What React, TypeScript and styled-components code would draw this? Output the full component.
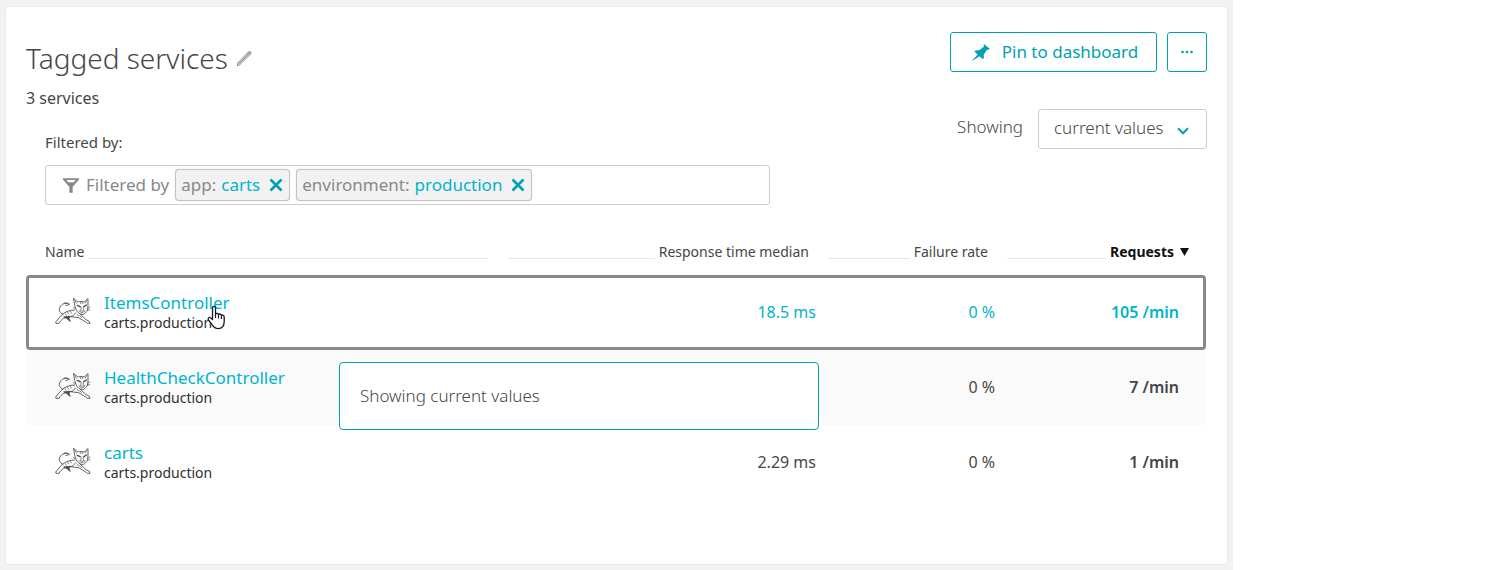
import React from 'react';
import styled, { createGlobalStyle, css } from 'styled-components';

const teal = '#00a1b2';
const linkBlue = '#00b4cc';
const ink = '#454646';
const muted = '#898989';
const line = '#cccccc';

const GlobalStyle = createGlobalStyle`
  *, *::before, *::after { box-sizing: border-box; }
  body {
    margin: 0;
    background: #fff;
    color: ${ink};
    font-family: 'Noto Sans', 'Open Sans', sans-serif;
    font-size: 17px;
    line-height: 20px;
  }
  button, input, select { font: inherit; color: inherit; margin: 0; }
`;

const Shell = styled.main`
  display: flex;
  width: 100%;
  max-width: 1233px;
  min-height: 100vh;
  padding: 6px 5px 5px;
  background: #f2f2f2;
`;

const Card = styled.section`
  flex: 1;
  min-width: 0;
  padding: 25px 20px;
  background: #fff;
  border: 1px solid #e6ecec;
  border-radius: 4px;
`;

const Header = styled.header`
  display: flex;
  justify-content: space-between;
  gap: 24px;
`;

const Heading = styled.div`
  flex: 1;
  max-width: 744px;
  padding-top: 3px;
`;

const TitleRow = styled.div`
  display: flex;
  align-items: center;
  gap: 8px;
`;

const Title = styled.h1`
  margin: 0;
  font-size: 28px;
  line-height: 46px;
  font-weight: 300;
`;

const IconButton = styled.button`
  display: inline-flex;
  padding: 0;
  border: 0;
  background: none;
  color: ${teal};
  cursor: pointer;
`;

const Count = styled.p`
  margin: 7px 0 0;
  font-size: 16px;
  line-height: 20px;
`;

const Filter = styled.div`
  margin: 24px 0 0 19px;
`;

const FilterLabel = styled.label`
  display: block;
  font-size: 15px;
  line-height: 20px;
`;

const FilterBox = styled.div`
  display: flex;
  align-items: center;
  height: 40px;
  margin-top: 13px;
  padding: 0 3px 0 17px;
  border: 1px solid ${line};
  border-radius: 3px;
  color: ${muted};
`;

const FilterHint = styled.span`
  margin: 0 6px 0 7px;
  white-space: nowrap;
`;

const Chip = styled.span`
  display: inline-flex;
  align-items: center;
  height: 32px;
  margin-right: 6px;
  padding: 0 6px 0 5px;
  border: 1px solid #c4c4c4;
  border-radius: 4px;
  box-shadow: 0 0 1px #bbb;
  background: #f2f2f2;
  white-space: nowrap;
`;

const ChipValue = styled.span`
  margin: 0 9px 0 5px;
  color: ${linkBlue};
`;

const FilterInput = styled.input`
  flex: 1;
  min-width: 0;
  border: 0;
  outline: 0;
  background: none;
`;

const Controls = styled.div`
  display: flex;
  flex-direction: column;
  align-items: flex-end;
  gap: 37px;
`;

const ButtonRow = styled.div`
  display: flex;
  gap: 10px;
`;

const OutlineButton = styled.button<{ $square?: boolean }>`
  display: flex;
  align-items: center;
  justify-content: center;
  gap: 12px;
  width: ${p => (p.$square ? '40px' : '207px')};
  height: 40px;
  padding: 0 ${p => (p.$square ? '0' : '0 0 3px')};
  border: 1px solid ${teal};
  border-radius: 3px;
  background: #fff;
  color: ${teal};
  cursor: pointer;
`;

const Showing = styled.div`
  display: flex;
  align-items: center;
  gap: 15px;
  font-weight: 300;
  > label { padding-bottom: 4px; }
`;

const SelectWrap = styled.div`
  display: grid;
  align-items: center;
  width: 169px;
  > * { grid-area: 1 / 1; }
  > svg { justify-self: end; margin: 4px 18px 0 0; pointer-events: none; }
`;

const Select = styled.select`
  width: 100%;
  height: 40px;
  padding: 0 36px 2px 15px;
  appearance: none;
  border: 1px solid ${line};
  border-radius: 3px;
  background: #fff;
`;

const TableArea = styled.div`
  position: relative;
  margin: 33px 1px 0 0;
`;

const Table = styled.table`
  width: 100%;
  table-layout: fixed;
  border-collapse: separate;
  border-spacing: 0;
`;

const Th = styled.th<{ $width?: number; $first?: boolean; $last?: boolean }>`
  width: ${p => (p.$width ? `${p.$width}px` : 'auto')};
  height: 37px;
  padding: 0 ${p => (p.$last ? 17 : p.$first ? 10 : 9)}px 9px ${p => (p.$first ? 19 : 10)}px;
  font-size: 14px;
  line-height: 20px;
  font-weight: ${p => (p.$last ? 700 : 400)};
  color: ${p => (p.$last ? '#111' : ink)};
`;

const ThInner = styled.div<{ $first?: boolean }>`
  display: flex;
  align-items: center;
  flex-direction: ${p => (p.$first ? 'row-reverse' : 'row')};
  gap: 4px;
  white-space: nowrap;
  &::before {
    content: '';
    flex: 1;
    height: 1px;
    margin-top: 13px;
    background: #e6e6e6;
  }
`;

const SortButton = styled.button`
  display: flex;
  align-items: center;
  gap: 6px;
  padding: 0;
  border: 0;
  background: none;
`;

const Td = styled.td`
  height: 75px;
  padding: 0 2px 2px 0;
  border: 3px solid transparent;
  border-width: 3px 0;
  font-size: 16px;
  text-align: right;
  &:first-child {
    padding: 0 0 0 26px;
    border-left-width: 3px;
    border-radius: 4px 0 0 4px;
    font-size: 17px;
    text-align: left;
  }
  &:last-child {
    padding-right: 24px;
    border-right-width: 3px;
    border-radius: 0 4px 4px 0;
    font-weight: 600;
  }
`;

const Row = styled.tr<{ $active?: boolean; $shaded?: boolean }>`
  background: ${p => (p.$shaded ? '#fafafa' : '#fff')};
  ${p => p.$active && css`
    color: ${linkBlue};
    ${Td} { border-color: ${muted}; }
  `}
`;

const NameCell = styled.div`
  display: flex;
  align-items: center;
  gap: 13px;
  > svg { margin-bottom: 4px; }
`;

const NameText = styled.div`
  position: relative;
`;

const ServiceLink = styled.a`
  display: block;
  color: ${linkBlue};
  text-decoration: none;
`;

const ServiceSource = styled.span`
  display: block;
  font-size: 14px;
  line-height: 20px;
  color: #2f3030;
`;

const Pointer = styled.svg`
  position: absolute;
  left: 103px;
  top: 12px;
`;

const Tooltip = styled.div`
  position: absolute;
  left: 313px;
  top: 124px;
  width: 480px;
  padding: 23px 20px;
  border: 1px solid ${teal};
  border-radius: 4px;
  background: #fff;
  line-height: 20px;
  font-weight: 300;
`;

const PencilIcon = () => (
  <svg width="16" height="17" viewBox="0 0 48 51" aria-hidden="true">
    <path d="M2 49 6 37 35 6c4-4 7-4 10-1 3 3 2 6-1 9L14 43Z" fill="#a6a6a6" />
    <path d="m2 49 4-12 8 7Z" fill="#777" />
    <path d="m10 38 27-28M13 41l28-28" stroke="#cfcfcf" strokeWidth="2" />
    <path d="m5 45 3-6 4 4Z" fill="#fff" />
  </svg>
);

const PinIcon = () => (
  <svg width="18" height="17" viewBox="0 0 53 50" fill="currentColor" aria-hidden="true">
    <path d="M0 49 17 31 7 22c3-3 8-4 13-3L35 8c-1-3-1-6 0-8l18 15c-3 2-6 3-9 2L34 32c2 5 1 10-2 13L22 36 1 50Z" />
  </svg>
);

const FunnelIcon = () => (
  <svg width="16" height="15" viewBox="0 0 48 45" fill="currentColor" aria-hidden="true">
    <path fillRule="evenodd" d="M0 1h48v4L29 26v18H19V26L0 5ZM10 6l6 7h16l6-7Z" />
  </svg>
);

const CloseIcon = () => (
  <svg width="14" height="14" viewBox="0 0 14 14" aria-hidden="true">
    <path d="m1.500 1.500 11 11M12.500 1.500l-11 11" stroke="currentColor" strokeWidth="2.600" />
  </svg>
);

const ChevronIcon = () => (
  <svg width="12" height="8" viewBox="0 0 12 8" fill="none" aria-hidden="true">
    <path d="m1 1.300 5 5 5-5" stroke={teal} strokeWidth="2" />
  </svg>
);

const DotsIcon = () => (
  <svg width="12" height="4" viewBox="0 0 12 4" fill="currentColor" aria-hidden="true">
    <circle cx="1.500" cy="2" r="1.300" />
    <circle cx="6" cy="2" r="1.300" />
    <circle cx="10.500" cy="2" r="1.300" />
  </svg>
);

const SortIcon = () => (
  <svg width="9" height="8" viewBox="0 0 9 8" fill="currentColor" aria-hidden="true">
    <path d="M0 0h9L4.500 8Z" />
  </svg>
);

const CatIcon = () => (
  <svg width="36" height="28" viewBox="0 0 108 84" fill="none" stroke="#4a4a4a" strokeWidth="2.600" strokeLinecap="round" strokeLinejoin="round" aria-hidden="true">
    <path d="M56 5c4 2 9 6 12 10 7-2 14-2 20 0 3-4 7-7 11-10v20l-1 14c-4 7-9 12-15 14-9-2-17-7-20-16-4-10-6-21-7-32Z" />
    <path d="m60 11 4 8M95 11l-4 7M77 16v4M83 16v4" strokeWidth="2" />
    <path d="m67 25 8 4M94 24l-7 5" strokeWidth="4" />
    <path d="M78 29v8l-3 3 6 3 7-3-3-3v-8M72 42l9 6 9-6" strokeWidth="2" />
    <path d="m55 32 6 2M99 33l6-3M98 38l7 1" strokeWidth="2" />
    <path d="M42 22c-10-6-22-2-27 8-5 9-1 18 9 22M42 22c-3-5-9-6-15-3M43 21c-3 4-7 5-11 4" />
    <path d="M59 39c-17 0-31 6-41 17L2 75l1 4h9c3-6 8-11 14-15l20-6" />
    <path d="M31 50l3 5M38 46l3 5M46 43l3 5" strokeWidth="2" />
    <path d="M61 48c-4 7-8 10-15 11l25 3 21 13 5 4h8l-2-6-10-5-17-16" />
    <path d="M27 60c6 2 9 5 13 9l6 4-4-8 2-6Z" fill="#4a4a4a" />
    <path d="M66 51l5 6M74 56l6 6" strokeWidth="2" />
  </svg>
);

const PointerIcon = () => (
  <Pointer width="20" height="26" viewBox="0 0 20 26" aria-hidden="true">
    <path
      d="M5.500 3c0-2.300 3-2.300 3 0v6c.8-1 2.600-.8 3 .5.900-.9 2.500-.5 2.900.8 1.200-.7 2.800.1 2.800 1.700v4.600c0 4.300-2.200 7-6 7-3.200 0-4.500-1.300-6-3.800l-3.700-5c-1-1.500.6-3 2-2l2 1.700Z"
      fill="#fff" stroke="#16182c" strokeWidth="1.300" strokeLinejoin="round"
    />
    <path d="M8.500 9v4M11.500 9.500v4M14.400 10.500v3.500" stroke="#16182c" strokeWidth="1.200" />
  </Pointer>
);

const filters = [
  { key: 'app:', value: 'carts' },
  { key: 'environment:', value: 'production' },
];

const services = [
  { name: 'ItemsController', source: 'carts.production', median: '18.5 ms', failures: '0 %', requests: '105 /min', hovered: true },
  { name: 'HealthCheckController', source: 'carts.production', median: '', failures: '0 %', requests: '7 /min', hovered: false },
  { name: 'carts', source: 'carts.production', median: '2.29 ms', failures: '0 %', requests: '1 /min', hovered: false },
];

export default function App() {
  return (
    <>
      <GlobalStyle />
      <Shell>
        <Card>
          <Header>
            <Heading>
              <TitleRow>
                <Title>Tagged services</Title>
                <IconButton aria-label="Edit title"><PencilIcon /></IconButton>
              </TitleRow>
              <Count>3 services</Count>
              <Filter>
                <FilterLabel htmlFor="filter">Filtered by:</FilterLabel>
                <FilterBox>
                  <FunnelIcon />
                  <FilterHint>Filtered by</FilterHint>
                  {filters.map(f => (
                    <Chip key={f.key}>
                      {f.key}
                      <ChipValue>{f.value}</ChipValue>
                      <IconButton aria-label={`Remove ${f.value}`}><CloseIcon /></IconButton>
                    </Chip>
                  ))}
                  <FilterInput id="filter" type="text" />
                </FilterBox>
              </Filter>
            </Heading>
            <Controls>
              <ButtonRow>
                <OutlineButton><PinIcon />Pin to dashboard</OutlineButton>
                <OutlineButton $square aria-label="More actions"><DotsIcon /></OutlineButton>
              </ButtonRow>
              <Showing>
                <label htmlFor="range">Showing</label>
                <SelectWrap>
                  <Select id="range"><option>current values</option></Select>
                  <ChevronIcon />
                </SelectWrap>
              </Showing>
            </Controls>
          </Header>
          <TableArea>
            <Table>
              <thead>
                <tr>
                  <Th $first><ThInner $first>Name</ThInner></Th>
                  <Th $width={320}><ThInner>Response time median</ThInner></Th>
                  <Th $width={179}><ThInner>Failure rate</ThInner></Th>
                  <Th $width={209} $last>
                    <ThInner><SortButton>Requests<SortIcon /></SortButton></ThInner>
                  </Th>
                </tr>
              </thead>
              <tbody>
                {services.map((s, i) => (
                  <Row key={s.name} $active={s.hovered} $shaded={i % 2 === 1}>
                    <Td>
                      <NameCell>
                        <CatIcon />
                        <NameText>
                          <ServiceLink href="#">{s.name}</ServiceLink>
                          <ServiceSource>{s.source}</ServiceSource>
                          {s.hovered && <PointerIcon />}
                        </NameText>
                      </NameCell>
                    </Td>
                    <Td>{s.median}</Td>
                    <Td>{s.failures}</Td>
                    <Td>{s.requests}</Td>
                  </Row>
                ))}
              </tbody>
            </Table>
            <Tooltip role="tooltip">Showing current values</Tooltip>
          </TableArea>
        </Card>
      </Shell>
    </>
  );
}
